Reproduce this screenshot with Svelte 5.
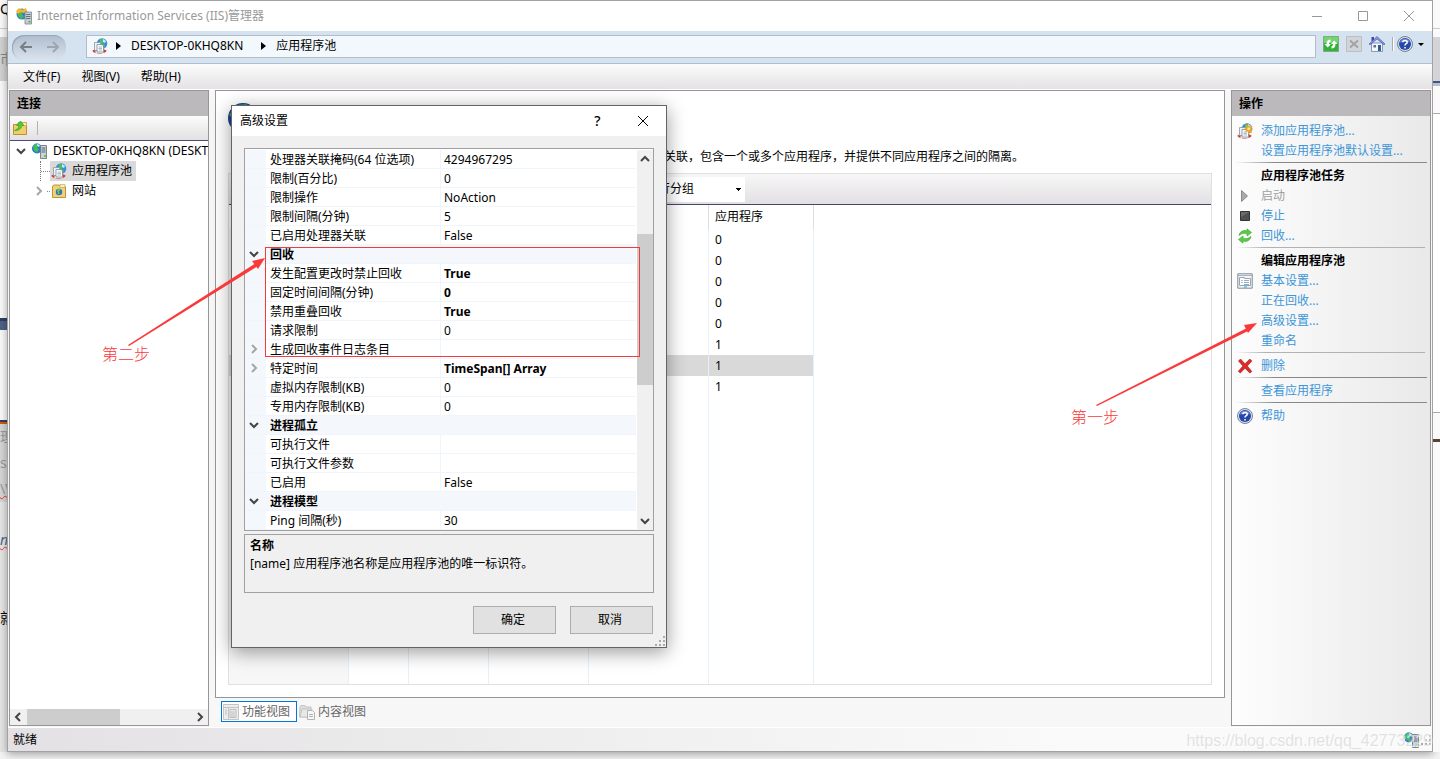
<script>
  const menus = ["文件(F)", "视图(V)", "帮助(H)"];

  const properties = [
    { name: "处理器关联掩码(64 位选项)", value: "4294967295" },
    { name: "限制(百分比)", value: "0" },
    { name: "限制操作", value: "NoAction" },
    { name: "限制间隔(分钟)", value: "5" },
    { name: "已启用处理器关联", value: "False" },
    { name: "回收", group: true },
    { name: "发生配置更改时禁止回收", value: "True", changed: true },
    { name: "固定时间间隔(分钟)", value: "0", changed: true },
    { name: "禁用重叠回收", value: "True", changed: true },
    { name: "请求限制", value: "0" },
    { name: "生成回收事件日志条目", value: "", expandable: true },
    { name: "特定时间", value: "TimeSpan[] Array", changed: true, expandable: true },
    { name: "虚拟内存限制(KB)", value: "0" },
    { name: "专用内存限制(KB)", value: "0" },
    { name: "进程孤立", group: true },
    { name: "可执行文件", value: "" },
    { name: "可执行文件参数", value: "" },
    { name: "已启用", value: "False" },
    { name: "进程模型", group: true },
    { name: "Ping 间隔(秒)", value: "30" },
  ];

  const actions = [
    { label: "添加应用程序池...", icon: "addpool" },
    { label: "设置应用程序池默认设置..." },
    { sep: "major" },
    { heading: "应用程序池任务" },
    { label: "启动", icon: "play", disabled: true },
    { label: "停止", icon: "stop" },
    { label: "回收...", icon: "recycle" },
    { sep: "minor" },
    { heading: "编辑应用程序池" },
    { label: "基本设置...", icon: "settings" },
    { label: "正在回收..." },
    { label: "高级设置..." },
    { label: "重命名" },
    { sep: "minor" },
    { label: "删除", icon: "delete" },
    { sep: "major" },
    { label: "查看应用程序" },
    { sep: "major" },
    { label: "帮助", icon: "help" },
  ];

  const appCounts = [0, 0, 0, 0, 0, 1, 1, 1];
  let selectedPool = $state(6);
</script>

{#snippet icon(name)}
  <svg class="icon" width="16" height="16" viewBox="0 0 16 16" aria-hidden="true">
    {#if name === "iis"}
      <circle cx="6" cy="6" r="5.5" fill="#2c7fd6" />
      <path d="M2 3l4-2 2 2-2 3 2 3-3 2-3-3z" fill="#4db848" />
      <path d="M0 3l3-3 3 2 4-2 1 3-3 2-3-1-3 2z" fill="#f2b630" />
      <path d="M9 4h6.500v12H9z" fill="#c5cdd3" stroke="#7b8790" stroke-width=".8" />
      <path d="M10 6.500h4.500M10 8.500h4.500M10 10.500h4.500" stroke="#66727b" />
      <path d="M12.500 13h2v1.500h-2z" fill="#48b832" />
    {:else if name === "server"}
      <circle cx="5" cy="5.500" r="5" fill="#2878d2" />
      <path d="M1 3l3-2.500 3 1-2 3 2 2-2 3-3-2z" fill="#3fbf52" />
      <path d="M5 1l3 1-1 2-2-1z" fill="#bde6f7" />
      <path d="M8.500 2.500h6V15.500h-6z" fill="#cbd2d8" stroke="#6d7a85" stroke-width=".9" />
      <path d="M9.500 5h4M9.500 7h4M9.500 9h4" stroke="#5c6870" />
      <path d="M12 12h2v2h-2z" fill="#5fd12d" />
    {:else if name === "pool" || name === "addpool"}
      <circle cx="10" cy="5.500" r="5.300" fill="#3b8ede" />
      <path d="M8 1.500l3-1 1 3-2 2 3 2-1 3-4-1z" fill="#4cc258" />
      <path d="M11 1l3 2-1 2-2-1z" fill="#c8ecf8" />
      <path d="M.5 12.500c0 4 14 4 14 0l-2-1H2.500z" fill="#d83a30" />
      <path d="M3.500 14h8" stroke="#eef2f5" stroke-width="2" />
      <path d="M2.500 4.500h6v8h-6z" fill="#eef3f7" stroke="#8695a3" stroke-width=".8" />
      <path d="M5 6.500h5l1.500 1.500v6H5z" fill="#fff" stroke="#7b8996" stroke-width=".8" />
      <path d="M6.500 9h3.500M6.500 10.500h3.500M6.500 12h3.500" stroke="#7d9cc0" stroke-width=".7" />
      {#if name === "addpool"}
        <path d="M12 1.500l1 2.500 2.500-1-1 2.500 1.500 1-1.500 1 .5 2.500-2.500-1-1 2-1-2.500-2.500.5 1-2.500-1.500-1.500 2-.5-.5-2.500 2.500 1z" fill="#f6a623" />
        <circle cx="11.700" cy="5.800" r="1.300" fill="#fff2a8" />
      {/if}
    {:else if name === "sites"}
      <path d="M1.500 3.500l1-1.500h6l1 1.500h5v11h-13z" fill="#f0d079" stroke="#bd9436" />
      <path d="M9 1.500h5v3H9z" fill="#fbf0b8" stroke="#c8a850" stroke-width=".7" />
      <circle cx="8" cy="9" r="3.200" fill="#2b74c4" />
      <path d="M6 7l2-1.500 1.500 1L8 9l1 1.500-2 1z" fill="#64ca58" />
    {:else if name === "connect"}
      <path d="M.5 4.500h4l1-2h8v12H.5z" fill="#f0cf6b" stroke="#b79238" />
      <path d="M9.500 2.500h4v3h-4z" fill="#f9eeb4" stroke="#c5a44b" stroke-width=".6" />
      <path d="M1.500 10.500c2-1 4-2 4.500-5H3.500L7.500 1 11 5.500H9c-1 4-4 5.500-7.500 5z" fill="#4fcc35" stroke="#2d9d20" stroke-width=".6" />
    {:else if name === "play"}
      <path d="M4.500 2.500l6 5.500-6 5.500z" fill="#aaa" stroke="#777" stroke-width=".8" />
    {:else if name === "stop"}
      <path d="M3.500 3.500h9v9h-9z" fill="#505050" stroke="#333" />
      <path d="M4 4h8L4 9z" fill="#6b6b6b" />
    {:else if name === "recycle"}
      <path d="M2 7.500C2.500 4 6 1.500 10 3V.8L14.500 4.500 10 8V5.800C7 4.800 4.500 5.500 2 7.500z" fill="#5ccc43" stroke="#38a52b" stroke-width=".6" />
      <path d="M14 8.500c-.5 3.500-4 6-8 4.500v2.200L1.500 11.500 6 8v2.200c3 1 5.500.3 8-1.700z" fill="#5ccc43" stroke="#38a52b" stroke-width=".6" />
    {:else if name === "settings"}
      <path d="M.8.800h14.400v14.400H.8z" fill="#f3f5f7" stroke="#7f8b98" />
      <path d="M1 2.500h14" stroke="#aab4c0" />
      <path d="M2.500 4.500h5v1h6v7h-11z" fill="#fff" stroke="#9aa5b2" />
      <path d="M7 7.500h5M7 9.500h5M7 11.500h5" stroke="#8695a6" stroke-width=".8" />
      <path d="M4.500 7.500h1M4.500 9.500h1M7 14h3" stroke="#2ba9e8" />
    {:else if name === "delete"}
      <path d="M1.500 3L3.500 1 8 5.800 12.800 1 14.800 3l-4.500 5 4.500 5.500-2 1.500L8 10.200 3.300 15 1.300 13.300 6 8z" fill="#e02a2a" stroke="#a82323" stroke-width=".7" />
    {:else if name === "help"}
      <circle cx="8" cy="8" r="7.500" fill="#dbe1ee" stroke="#6f7583" stroke-width=".9" />
      <circle cx="8" cy="8" r="6" fill="#2546aa" />
      <path d="M3 6.500a5.200 5.200 0 0 1 10 0C9 5 6 6 3 6.500z" fill="#6d8ddb" />
      <path d="M5.800 6.300C6 4 10.200 4 10.200 6.200 10.200 7.800 8 7.600 8 9.500M8 11v1.500" fill="none" stroke="#fff" stroke-width="1.600" />
    {:else if name === "refresh"}
      <path d="M.5.500h15v15H.5z" fill="#30b336" stroke="#83a783" />
      <path d="M1 1h14v6H1z" fill="#71d66e" />
      <path d="M1.500 8H3.500c0-3 1.500-4.500 4-4.500V6c-1 0-1.500.5-1.500 2h2L4.800 11.500zM14.500 8h-2c0 3-1.500 4.500-4 4.500V10c1 0 1.500-.5 1.500-2H8l3.200-3.500z" fill="#fff" />
    {:else if name === "cancel"}
      <path d="M.5.500h15v15H.5z" fill="#d2d5d8" stroke="#bbbfc3" />
      <path d="M4 4.500l8 7M12 4.500l-8 7" stroke="#a0a4a9" stroke-width="2" />
    {:else if name === "home"}
      <path d="M2.500 7h11v8.500h-11z" fill="#f3f5fb" stroke="#7883a0" stroke-width=".8" />
      <path d="M2.500 1h2.500v4H2.500z" fill="#3b48bd" />
      <path d="M0 8l8-7.500L16 8l-1 .8L8 3 1 8.800z" fill="#8c9bd6" stroke="#3c4bae" stroke-width=".6" />
      <path d="M9 9h3v6H9z" fill="#2d5f9f" />
      <path d="M4.500 9h2.500v2.500H4.500z" fill="#5b6f93" />
    {:else if name === "features"}
      <path d="M.5.500h15v15H.5z" fill="#eee" stroke="#c4c4c4" />
      <path d="M1 3.500h14M5.500 4v11" stroke="#c4c4c4" />
      <path d="M7 5.500h6v8H7zM2 6h2M2 8h2M2 10h2M8 8h4M8 10h4M8 12h4" fill="none" stroke="#bcbcbc" />
    {:else if name === "content"}
      <path d="M1 3l1-1.500h4L7 3h5v10H.500z" fill="#ddd" stroke="#c4c4c4" />
      <path d="M3 5h10l-2 8H1z" fill="#e8e8e8" stroke="#c4c4c4" />
      <path d="M8.500 6.500h5l2 2v7h-7z" fill="#f6f6f6" stroke="#b4b4b4" />
      <path d="M10 10.500h4M10 12.500h4" stroke="#b4b4b4" />
    {/if}
  </svg>
{/snippet}

{#snippet chevron(dir)}
  <svg class="chevron {dir}" width="10" height="10" viewBox="0 0 10 10" aria-hidden="true">
    {#if dir === "down"}
      <path d="M1 3l4 4 4-4" />
    {:else if dir === "up"}
      <path d="M1 7l4-4 4 4" />
    {:else if dir === "left"}
      <path d="M7 1L3 5l4 4" />
    {:else}
      <path d="M3 1l4 4-4 4" />
    {/if}
  </svg>
{/snippet}

<div class="desktop">
  <div class="backdrop left">
    <span class="top-text">Q</span>
    <span class="grey-block">市</span>
    <span class="blue-bar"></span>
    <span class="orange-bar"></span>
    <span class="code">理<br />s=<br /><u>\V</u></span>
    <span class="italic"><u>n</u></span>
    <span class="last">就</span>
  </div>

  <main class="window">
    <header class="titlebar">
      {@render icon("iis")}
      <h1>Internet Information Services (IIS)管理器</h1>
      <button title="最小化">
        <svg width="12" height="12" viewBox="0 0 12 12"><path d="M1 6.500h10" /></svg>
      </button>
      <button title="最大化">
        <svg width="12" height="12" viewBox="0 0 12 12"><path d="M1.500 1.500h9v9h-9z" /></svg>
      </button>
      <button title="关闭">
        <svg width="12" height="12" viewBox="0 0 12 12"><path d="M1 1l10 10M11 1L1 11" /></svg>
      </button>
    </header>

    <nav class="navbar">
      <div class="history">
        <button title="后退">
          <svg width="14" height="12" viewBox="0 0 14 12"><path d="M13 6H2M7 1L2 6l5 5" /></svg>
        </button>
        <button title="前进" class="forward">
          <svg width="14" height="12" viewBox="0 0 14 12"><path d="M1 6h11M7 1l5 5-5 5" /></svg>
        </button>
      </div>
      <div class="address">
        {@render icon("pool")}
        <i class="caret-right"></i>
        <a href="#server">DESKTOP-0KHQ8KN</a>
        <i class="caret-right"></i>
        <a href="#pools">应用程序池</a>
      </div>
      <div class="nav-tools">
        <button title="刷新">{@render icon("refresh")}</button>
        <button title="停止">{@render icon("cancel")}</button>
        <button title="主页">{@render icon("home")}</button>
        <span class="divider"></span>
        <button title="帮助" class="help">{@render icon("help")}<i class="caret-down"></i></button>
      </div>
    </nav>

    <div class="menubar">
      {#each menus as menu}
        <button>{menu}</button>
      {/each}
    </div>

    <div class="workspace">
      <aside class="pane connections">
        <h2>连接</h2>
        <div class="pane-toolbar">
          <button title="连接">{@render icon("connect")}</button>
          <span class="divider"></span>
        </div>
        <ul class="tree">
          <li>
            <button title="折叠">{@render chevron("down")}</button>
            <span class="dots root"></span>
            {@render icon("server")}
            <span class="label">DESKTOP-0KHQ8KN (DESKTOP)</span>
          </li>
          <li class="pools">
            <span class="dots"></span>
            <span class="selected">{@render icon("pool")}<span class="label">应用程序池</span></span>
          </li>
          <li class="sites">
            <button title="展开">{@render chevron("right")}</button>
            <span class="dots short"></span>
            {@render icon("sites")}
            <span class="label">网站</span>
          </li>
        </ul>
        <div class="hscroll">
          {@render chevron("left")}
          <div class="track"><div class="thumb"></div></div>
          {@render chevron("right")}
        </div>
      </aside>

      <section class="center">
        <div class="page">
          <div class="page-icon">
            <svg width="32" height="32" viewBox="0 0 32 32" aria-hidden="true">
              <circle cx="15" cy="15" r="15" fill="#1d3f9c" />
              <path d="M1 12L8 2l11-1-2 6-6 3-4 7z" fill="#36a146" />
            </svg>
          </div>
          <p>关联，包含一个或多个应用程序，并提供不同应用程序之间的隔离。</p>
          <div class="list">
            <div class="list-toolbar">
              <select aria-label="分组依据">
                <option>不进行分组</option>
              </select>
            </div>
            <table class="pool-table">
              <colgroup>
                <col class="c1" /><col class="c2" /><col class="c3" /><col class="c4" /><col class="c5" /><col class="c6" /><col />
              </colgroup>
              <thead>
                <tr><th></th><th></th><th></th><th></th><th></th><th>应用程序</th><th></th></tr>
              </thead>
              <tbody>
                {#each appCounts as count, i}
                  <tr class:selected={i === selectedPool} onclick={() => (selectedPool = i)}>
                    <td></td><td></td><td></td><td></td><td></td><td>{count}</td><td></td>
                  </tr>
                {/each}
                <tr class="rest"><td></td><td></td><td></td><td></td><td></td><td></td><td></td></tr>
              </tbody>
            </table>
          </div>
        </div>
        <div class="view-tabs">
          <button class="active">{@render icon("features")}功能视图</button>
          <button>{@render icon("content")}内容视图</button>
        </div>
      </section>

      <aside class="pane actions">
        <h2>操作</h2>
        <ul>
          {#each actions as action}
            {#if action.sep}
              <li class="sep {action.sep}"></li>
            {:else if action.heading}
              <li class="heading">{action.heading}</li>
            {:else}
              <li>
                <span class="slot">{#if action.icon}{@render icon(action.icon)}{/if}</span>
                <a href="#action" class:disabled={action.disabled}>{action.label}</a>
              </li>
            {/if}
          {/each}
        </ul>
        <div class="note step-one">
          <svg width="190" height="86" viewBox="0 0 190 86" aria-hidden="true">
            <path d="M26 85l1 1L178 11l-1-3z" />
            <path d="M187 3l-9 10-4-8z" />
          </svg>
          <span>第一步</span>
        </div>
      </aside>
    </div>

    <footer class="statusbar">
      <span>就绪</span>
      {@render icon("server")}
      <svg class="grip" width="12" height="12" viewBox="0 0 12 12" aria-hidden="true">
        <path d="M9 1h2v2H9zM9 5h2v2H9zM5 5h2v2H5zM9 9h2v2H9zM5 9h2v2H5zM1 9h2v2H1z" />
      </svg>
      <span class="watermark">https://blog.csdn.net/qq_42773229</span>
    </footer>
  </main>

  <div class="backdrop right">
    <span class="grey"></span>
    <span class="blue"></span>
    <span class="box"></span>
    <span class="brown"></span>
  </div>

  <div class="dialog" role="dialog" aria-labelledby="dialog-title">
    <header>
      <h2 id="dialog-title">高级设置</h2>
      <button title="帮助">?</button>
      <button title="关闭">
        <svg width="12" height="12" viewBox="0 0 12 12"><path d="M1 1l10 10M11 1L1 11" /></svg>
      </button>
    </header>
    <div class="grid-box">
      <table class="props">
        <colgroup><col class="gutter" /><col class="name" /><col /></colgroup>
        <tbody>
          {#each properties as prop}
            {#if prop.group}
              <tr class="group">
                <td class="mark">{@render chevron("down")}</td>
                <th colspan="2">{prop.name}</th>
              </tr>
            {:else}
              <tr>
                <td class="mark">{#if prop.expandable}{@render chevron("right")}{/if}</td>
                <td class="name">{prop.name}</td>
                <td class="value" class:changed={prop.changed}>{prop.value}</td>
              </tr>
            {/if}
          {/each}
        </tbody>
      </table>
      <div class="vscroll">
        {@render chevron("up")}
        <div class="track"><div class="thumb"></div></div>
        {@render chevron("down")}
      </div>
    </div>
    <div class="description">
      <b>名称</b>
      <p>[name] 应用程序池名称是应用程序池的唯一标识符。</p>
    </div>
    <div class="buttons">
      <button>确定</button>
      <button>取消</button>
    </div>
    <svg class="grip" width="12" height="12" viewBox="0 0 12 12" aria-hidden="true">
      <path d="M9 1h2v2H9zM9 5h2v2H9zM5 5h2v2H5zM9 9h2v2H9zM5 9h2v2H5zM1 9h2v2H1z" />
    </svg>
    <div class="highlight"></div>
    <div class="note step-two">
      <svg width="170" height="86" viewBox="0 0 170 86" aria-hidden="true">
        <path d="M27 88l1 1L157 9l-2-3z" />
        <path d="M164 1l-7 11-6-8z" />
      </svg>
      <span>第二步</span>
    </div>
  </div>
</div>

<style>
  :global(body) {
    background: #f0f0f0;
    font-family: "Noto Sans", "Noto Sans CJK SC", sans-serif;
    font-size: 12px;
    line-height: 20px;
    color: #000;
  }
  h1,
  h2,
  p,
  ul {
    margin: 0;
    padding: 0;
    font-size: 12px;
    font-weight: 400;
    list-style: none;
  }
  button {
    display: flex;
    align-items: center;
    justify-content: center;
    margin: 0;
    padding: 0;
    border: 0;
    background: none;
    font: inherit;
    color: inherit;
  }
  a {
    color: inherit;
    text-decoration: none;
  }
  svg {
    display: block;
    flex: none;
    overflow: visible;
  }
  table {
    border-collapse: separate;
    border-spacing: 0;
    table-layout: fixed;
    width: 100%;
  }
  th,
  td {
    padding: 0;
    text-align: left;
    font-weight: 400;
  }

  .desktop {
    position: relative;
    display: grid;
    grid-template-columns: 7px minmax(0, 1fr) 7px;
    box-sizing: border-box;
    min-height: 100vh;
    padding-bottom: 7px;
    overflow: hidden;
    background: #f3f3f3;
  }

  /* slivers of the windows behind */
  .backdrop {
    display: flex;
    flex-direction: column;
    overflow: hidden;
    font-size: 14px;
    background: #fafafa;
  }
  .backdrop.left {
    background: linear-gradient(#fafafa 0 420px, #e6e6e6 420px);
  }
  .backdrop span {
    flex: none;
    line-height: 24px;
    white-space: nowrap;
  }
  .top-text {
    height: 28px;
    border-bottom: 1px solid #ccc;
  }
  .left .top-text {
    line-height: 18px;
  }
  .grey-block {
    height: 44px;
    margin-top: 8px;
    background: #d2d2d2;
    color: #888;
  }
  .left .grey-block {
    line-height: 44px;
  }
  .blue-bar {
    height: 9px;
    margin-top: 237px;
    border-top: 3px solid #2f4062;
    background: #4f6287;
  }
  .orange-bar {
    height: 2px;
    margin-top: 90px;
    border-top: 2px solid #34405c;
    background: #d05a10;
  }
  .code {
    height: 78px;
    background: #d6d6d6;
    color: #999;
  }
  .left .code {
    line-height: 26px;
  }
  .italic {
    margin-top: 26px;
    font-style: italic;
    color: #456a94;
  }
  .last {
    margin-top: 54px;
  }
  .backdrop u {
    text-decoration: underline wavy 1px #e33;
  }
  .right .grey {
    height: 44px;
    margin-top: 28px;
    padding-top: 8px;
    border-top: 1px solid #ccc;
    background: linear-gradient(#fafafa 8px, #d4d4d8 8px);
  }
  .right .blue {
    height: 2px;
    background: #41567f;
    border-bottom: 3px solid #b9bfd0;
  }
  .right .box {
    height: 298px;
    margin-top: 27px;
    border: solid #aaa;
    border-width: 1px 0;
    background: #fff;
  }
  .right .brown {
    height: 3px;
    margin-top: 26px;
    background: #5a4038;
  }

  .window {
    display: flex;
    flex-direction: column;
    border: 1px solid #a2a2a2;
    background: #f7f7f7;
    box-shadow: 0 2px 8px rgba(0, 0, 0, 0.35);
  }

  .titlebar {
    display: flex;
    align-items: center;
    height: 30px;
    padding-left: 8px;
    background: #fff;
    color: #999;
  }
  .titlebar h1 {
    flex: 1;
    margin-left: 5px;
  }
  .titlebar button {
    width: 46px;
    height: 30px;
  }
  .titlebar button path {
    fill: none;
    stroke: #999;
  }

  .navbar {
    display: flex;
    align-items: center;
    height: 32px;
    padding: 0 8px 0 4px;
    border-bottom: 1px solid #b0bfd0;
    background: #d5e3f1;
  }
  .history {
    display: flex;
    width: 54px;
    height: 25px;
    margin-right: 20px;
    border-radius: 12px;
    background: linear-gradient(#aebccc, #d9e3ee);
    box-shadow: inset 1px 1px 1px #98a5b4;
  }
  .history button {
    flex: 1;
  }
  .history path {
    fill: none;
    stroke: #777f88;
    stroke-width: 2;
  }
  .history .forward path {
    stroke: #9da6b0;
  }
  .address {
    display: flex;
    flex: 1;
    align-items: center;
    box-sizing: border-box;
    height: 23px;
    margin-right: 7px;
    margin-bottom: 2px;
    padding-left: 5px;
    border: 1px solid #b3bdc9;
    background: #f3f8fc;
  }
  .address a {
    margin-right: 18px;
  }
  .caret-right {
    margin: 0 10px 0 8px;
    border: solid transparent;
    border-width: 4px 0 4px 5px;
    border-left-color: #000;
  }
  .address a + .caret-right {
    margin-left: 0;
  }
  .caret-down {
    margin-left: 5px;
    border: solid transparent;
    border-width: 3px 3px 0;
    border-top-color: #000;
  }
  .nav-tools {
    display: flex;
    align-items: center;
    gap: 7px;
    margin-bottom: 6px;
  }
  .nav-tools .divider {
    width: 1px;
    height: 14px;
    background: #aaa;
    border-right: 1px solid #fff;
  }
  .nav-tools .help {
    margin-left: -4px;
  }

  .menubar {
    display: flex;
    gap: 21px;
    height: 25px;
    padding-left: 15px;
    border-bottom: 1px solid #fff;
    background: linear-gradient(#fcfcfc, #e4e2e4);
  }

  .workspace {
    display: grid;
    grid-template-columns: 200px minmax(0, 1fr) 200px;
    gap: 6px;
    flex: 1;
    padding: 0 1px 1px;
  }
  .pane {
    display: flex;
    flex-direction: column;
    min-width: 0;
    border: 1px solid #969696;
    background: #fff;
  }
  .pane h2 {
    height: 25px;
    padding-left: 7px;
    line-height: 25px;
    font-weight: 700;
    background: #bcb9bc;
  }
  .pane-toolbar {
    display: flex;
    align-items: center;
    gap: 8px;
    height: 24px;
    padding-left: 3px;
    border-bottom: 1px solid #4c4a78;
    background: linear-gradient(#fcfcfc, #e2e0e2);
  }
  .pane-toolbar .divider {
    width: 1px;
    height: 14px;
    background: #b5b3a5;
  }

  .tree {
    flex: 1;
    overflow: hidden;
  }
  .tree li {
    display: flex;
    align-items: center;
    height: 20px;
    padding-left: 6px;
    white-space: nowrap;
  }
  .tree .label {
    margin-left: 5px;
  }
  .tree .dots {
    width: 9px;
    height: 20px;
    border-left: 1px dotted #777;
    background: linear-gradient(90deg, #888 50%, transparent 50%) 0 10px / 2px 1px repeat-x;
  }
  .tree .dots.short,
  .tree .dots.root {
    width: 4px;
    margin: 0 0 0 3px;
    border: 0;
  }
  .tree .dots.root {
    margin-right: 3px;
  }
  .tree .pools {
    padding-left: 30px;
  }
  .tree .sites {
    padding-left: 24px;
  }
  .tree .selected {
    display: flex;
    align-items: center;
    padding: 0 4px 0 1px;
    background: #d9d9d9;
  }
  .chevron path {
    fill: none;
    stroke: #444;
    stroke-width: 2;
  }
  .tree .chevron.right path,
  .props .chevron.right path {
    stroke: #a6a6a6;
  }
  .hscroll {
    display: flex;
    align-items: center;
    height: 16px;
    padding: 0 3px;
    background: #f0f0f0;
  }
  .hscroll .track {
    flex: 1;
    margin: 0 4px;
  }
  .hscroll .thumb {
    width: 57%;
    height: 16px;
    background: #cdcdcd;
  }

  .center {
    display: flex;
    flex-direction: column;
    min-width: 0;
  }
  .page {
    display: flex;
    flex: 1;
    flex-direction: column;
    padding: 12px;
    border: 1px solid #969696;
    background: #fff;
  }
  .page-icon {
    height: 44px;
  }
  /* the dialog covers the first part of this line */
  .page p {
    height: 26px;
    padding-left: 436px;
    white-space: nowrap;
  }
  .list {
    display: flex;
    flex: 1;
    flex-direction: column;
    border: 1px solid #e0e0e0;
  }
  .list-toolbar {
    display: flex;
    align-items: center;
    height: 30px;
    padding-left: 396px;
    border-bottom: 1px solid #45456f;
    background: linear-gradient(#f8f7f8, #e2e0e2);
  }
  .list-toolbar select {
    appearance: none;
    width: 120px;
    height: 25px;
    padding: 0 0 0 9px;
    border: 0;
    border-radius: 0;
    background:
      linear-gradient(#000, #000) 111px 11px / 5px 1px no-repeat,
      linear-gradient(#000, #000) 112px 12px / 3px 1px no-repeat,
      linear-gradient(#000, #000) 113px 13px / 1px 1px no-repeat,
      #fff;
    font: inherit;
    color: inherit;
  }
  .pool-table {
    flex: 1;
    height: 1px;
  }
  .pool-table .c1,
  .pool-table .c5 {
    width: 120px;
  }
  .pool-table .c2 {
    width: 60px;
  }
  .pool-table .c3 {
    width: 80px;
  }
  .pool-table .c4 {
    width: 100px;
  }
  .pool-table .c6 {
    width: 105px;
  }
  .pool-table th,
  .pool-table td {
    height: 21px;
    padding-left: 6px;
    border-right: 1px solid #e6effa;
  }
  .pool-table th {
    height: 24px;
    border-right-color: #ddd;
  }
  .pool-table th:last-child,
  .pool-table td:last-child {
    border-right: 0;
  }
  .pool-table td:first-child {
    background: #f7f7f7;
  }
  .pool-table .selected td:not(:last-child) {
    background: #d9d9d9;
  }
  .pool-table .rest td {
    height: auto;
  }

  .view-tabs {
    display: flex;
    align-items: flex-start;
    gap: 2px;
    height: 25px;
    padding: 3px 0 0 6px;
    color: #666;
  }
  .view-tabs button {
    gap: 3px;
    height: 21px;
  }
  .view-tabs .active {
    box-sizing: border-box;
    padding: 0 6px 0 1px;
    border: 1px solid #0078d7;
    background: #fff;
  }

  .actions {
    position: relative;
    background: linear-gradient(90deg, #fdfdfd, #e9e9e9);
  }
  .actions ul {
    padding: 5px 3px 0;
  }
  .actions li {
    display: flex;
    align-items: center;
    height: 20px;
    color: #3c96d8;
  }
  .actions .slot {
    width: 26px;
    padding-left: 2px;
    box-sizing: border-box;
  }
  .actions .heading {
    padding-left: 26px;
    font-weight: 700;
    color: #000;
  }
  .actions .disabled {
    color: #a0a0a0;
  }
  .actions .sep {
    height: 5px;
    background: linear-gradient(90deg, transparent, #888 40px) 0 1px / 100% 1px no-repeat;
  }
  .actions .sep.minor {
    margin-right: 2px;
    background-image: linear-gradient(90deg, transparent, #b2b2b2 30px);
  }

  .statusbar {
    position: relative;
    display: flex;
    align-items: center;
    height: 23px;
    padding-left: 5px;
    border-top: 1px solid #fff;
    background: linear-gradient(90deg, #e3e1e3, #fafafa 75%);
  }
  .statusbar span:first-child {
    flex: 1;
  }
  .grip path {
    fill: #aaa;
  }
  .watermark {
    position: absolute;
    right: 0;
    bottom: 0;
    font-family: "Liberation Sans", sans-serif;
    font-size: 16px;
    color: rgba(200, 200, 200, 0.5);
    text-shadow: 1px 1px 0 rgba(255, 255, 255, 0.7);
  }

  .dialog {
    position: absolute;
    top: 105px;
    left: 231px;
    width: 434px;
    border: 1px solid #646464;
    background: #f0f0f0;
    box-shadow: 0 4px 18px rgba(0, 0, 0, 0.4);
  }
  .dialog header {
    display: flex;
    align-items: center;
    height: 30px;
    padding: 0 1px 0 8px;
    background: #fff;
  }
  .dialog header h2 {
    flex: 1;
  }
  .dialog header button {
    width: 45px;
    height: 30px;
    font-size: 14px;
    font-weight: 500;
  }
  .dialog header path {
    fill: none;
    stroke: #000;
  }
  .grid-box {
    display: flex;
    margin: 12px 12px 3px;
    padding-top: 1px;
    border: 1px solid #a0a0a0;
    background: #fff;
  }
  .props {
    flex: 1;
    width: 0;
    margin-right: 1px;
  }
  .props .gutter {
    width: 21px;
  }
  .props col.name {
    width: 175px;
  }
  .props tr {
    height: 19px;
    line-height: 16px;
  }
  .props td,
  .props th {
    padding: 2px 0 0 4px;
    border-bottom: 1px solid #f0f4fb;
    white-space: nowrap;
  }
  .props td.name {
    border-right: 1px solid #f0f4fb;
  }
  .props td.value {
    padding-left: 3px;
  }
  .props td.mark {
    padding-top: 0;
  }
  .props .mark,
  .props .group th {
    background: #f4f7fc;
  }
  .props th,
  .props .changed {
    font-weight: 700;
  }
  .vscroll {
    display: flex;
    flex-direction: column;
    align-items: center;
    width: 16px;
    padding: 4px 0;
    background: #f0f0f0;
  }
  .vscroll .track {
    flex: 1;
    width: 100%;
    padding-top: 70px;
    box-sizing: border-box;
  }
  .vscroll .thumb {
    height: 151px;
    background: #cdcdcd;
  }
  .description {
    box-sizing: border-box;
    height: 59px;
    margin: 0 12px;
    padding: 2px 5px;
    border: 1px solid #a0a0a0;
    line-height: 18px;
  }
  .description b {
    display: block;
  }
  .buttons {
    display: flex;
    justify-content: flex-end;
    gap: 14px;
    padding: 13px 13px 1px;
  }
  .buttons button {
    box-sizing: border-box;
    width: 83px;
    height: 28px;
    padding-right: 3px;
    border: 1px solid #adadad;
    background: #e1e1e1;
  }
  .dialog .grip {
    margin-left: auto;
  }

  /* red marks drawn over the screen */
  .highlight {
    position: absolute;
    top: 141px;
    left: 33px;
    width: 373px;
    height: 108px;
    border: 1px solid #f03c3c;
  }
  .note {
    position: absolute;
    font-family: "Noto Sans CJK SC", sans-serif;
    font-size: 16px;
    font-weight: 300;
    color: #fa3a3a;
    pointer-events: none;
  }
  .note path {
    fill: #fa3a3a;
  }
  .note span {
    display: block;
    padding-left: 1px;
  }
  .step-two {
    top: 151px;
    left: -131px;
  }
  .step-one {
    top: 229px;
    left: -162px;
  }
</style>
